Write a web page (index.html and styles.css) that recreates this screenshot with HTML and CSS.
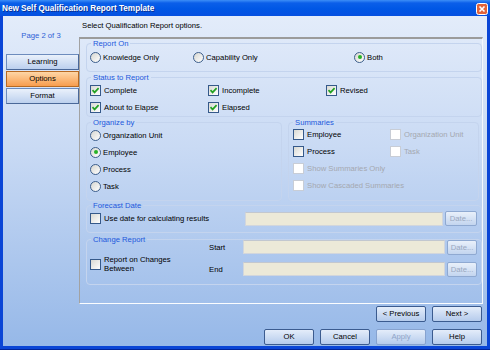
FILE: index.html
```html
<!DOCTYPE html>
<html lang="en">
<head>
    <meta charset="UTF-8">
    <title>New Self Qualification Report Template</title>
    <link rel="stylesheet" href="styles.css">
</head>
<body>
    <div class="window">
        <div class="titlebar">
            <span class="title">New Self Qualification Report Template</span>
            <span class="close">
                <svg width="12" height="12" viewBox="0 0 12 12">
                    <rect x="0.5" y="0.5" width="11" height="11" rx="2" fill="#e2633a" stroke="#fff"/>
                    <path d="M3.5 3.5 L8.5 8.5 M8.5 3.5 L3.5 8.5" stroke="#fff" stroke-width="1.6"/>
                </svg>
            </span>
        </div>
        <div class="client">
            <div class="side">
                <div class="page">Page 2 of 3</div>
                <div class="nav">
                    <div class="nav-btn">Learning</div>
                    <div class="nav-btn active">Options</div>
                    <div class="nav-btn">Format</div>
                </div>
            </div>
            <div class="main">
                <div class="intro">Select Qualification Report options.</div>
                <div class="panel">
                    <fieldset class="group report-on">
                        <legend>Report On</legend>
                        <div class="cols cols-report">
                            <label class="opt"><span class="radio"></span>Knowledge Only</label>
                            <label class="opt"><span class="radio"></span>Capability Only</label>
                            <label class="opt"><span class="radio on"></span>Both</label>
                        </div>
                    </fieldset>

                    <fieldset class="group status">
                        <legend>Status to Report</legend>
                        <div class="cols cols-status">
                            <label class="opt"><span class="box on"><svg viewBox="0 0 9 9"><path d="M1.5 4.2 L3.6 6.4 L7.6 2.2"/></svg></span>Complete</label>
                            <label class="opt"><span class="box on"><svg viewBox="0 0 9 9"><path d="M1.5 4.2 L3.6 6.4 L7.6 2.2"/></svg></span>Incomplete</label>
                            <label class="opt"><span class="box on"><svg viewBox="0 0 9 9"><path d="M1.5 4.2 L3.6 6.4 L7.6 2.2"/></svg></span>Revised</label>
                            <label class="opt"><span class="box on"><svg viewBox="0 0 9 9"><path d="M1.5 4.2 L3.6 6.4 L7.6 2.2"/></svg></span>About to Elapse</label>
                            <label class="opt"><span class="box on"><svg viewBox="0 0 9 9"><path d="M1.5 4.2 L3.6 6.4 L7.6 2.2"/></svg></span>Elapsed</label>
                        </div>
                    </fieldset>

                    <div class="split">
                        <fieldset class="group organize">
                            <legend>Organize by</legend>
                            <div class="list">
                                <label class="opt"><span class="radio"></span>Organization Unit</label>
                                <label class="opt"><span class="radio on"></span>Employee</label>
                                <label class="opt"><span class="radio"></span>Process</label>
                                <label class="opt"><span class="radio"></span>Task</label>
                            </div>
                        </fieldset>
                        <fieldset class="group summaries">
                            <legend>Summaries</legend>
                            <div class="cols cols-summ">
                                <label class="opt"><span class="box"></span>Employee</label>
                                <label class="opt off"><span class="box"></span>Organization Unit</label>
                                <label class="opt"><span class="box"></span>Process</label>
                                <label class="opt off"><span class="box"></span>Task</label>
                                <label class="opt off wide"><span class="box"></span>Show Summaries Only</label>
                                <label class="opt off wide"><span class="box"></span>Show Cascaded Summaries</label>
                            </div>
                        </fieldset>
                    </div>

                    <fieldset class="group forecast">
                        <legend>Forecast Date</legend>
                        <div class="date-row">
                            <label class="opt"><span class="box"></span>Use date for calculating results</label>
                            <span class="field"></span>
                            <span class="date-btn">Date...</span>
                        </div>
                    </fieldset>

                    <fieldset class="group change">
                        <legend>Change Report</legend>
                        <div class="change-grid">
                            <label class="opt changes"><span class="box"></span><span>Report on Changes<br>Between</span></label>
                            <span class="lbl">Start</span>
                            <span class="field"></span>
                            <span class="date-btn">Date...</span>
                            <span class="lbl">End</span>
                            <span class="field"></span>
                            <span class="date-btn">Date...</span>
                        </div>
                    </fieldset>
                </div>

                <div class="btn-row wizard">
                    <span class="btn">&lt; Previous</span>
                    <span class="btn">Next &gt;</span>
                </div>
                <div class="btn-row actions">
                    <span class="btn">OK</span>
                    <span class="btn">Cancel</span>
                    <span class="btn disabled">Apply</span>
                    <span class="btn">Help</span>
                </div>
            </div>
        </div>
    </div>
</body>
</html>
```

FILE: styles.css
```css
/* XP style dialog, small Tahoma-ish text */
body {
    margin: 0;
    background: #ffffff;
    font-family: "Liberation Sans", Arial, sans-serif;
    font-size: 7.7px;
    color: #000000;
}

.window {
    width: 490px;
    height: 350px;
    box-sizing: border-box;
    display: flex;
    flex-direction: column;
    background: #0a45d6;
    padding: 0 3px 3px 3px;
    border-bottom: 1px solid #00249a;
}

.titlebar {
    height: 16px;
    margin: 0 -3px;
    padding: 0 2px 0 2px;
    display: flex;
    align-items: center;
    justify-content: space-between;
    background: linear-gradient(#3d8ef7 0, #0b5fe9 3px, #0057e5 55%, #0650e0 100%);
}

.title {
    color: #ffffff;
    font-weight: bold;
    font-size: 8.2px;
    text-shadow: 1px 1px 0 #0a2f92;
}

.close {
    display: flex;
    margin-top: 1px;
}

.client {
    flex: 1;
    display: flex;
    background: linear-gradient(#e3ecfa 0, #c9daf4 40%, #96b8e8 100%);
}

.side {
    width: 76px;
    display: flex;
    flex-direction: column;
}

.page {
    margin-top: 15px;
    line-height: 9px;
    text-align: center;
    color: #2f62d6;
}

.nav {
    margin-top: 14px;
    margin-left: 3px;
    display: flex;
    flex-direction: column;
    gap: 1px;
}

.nav-btn {
    height: 16px;
    box-sizing: border-box;
    line-height: 14px;
    text-align: center;
    border: 1px solid #6d8cbd;
    border-right-color: #4a6899;
    border-bottom-color: #4a6899;
    background: linear-gradient(#eaf1fb, #bcd0ee);
}

.nav-btn.active {
    border-color: #b86a22;
    background: linear-gradient(#fed6a6, #f89d4e);
}

.main {
    flex: 1;
    display: flex;
    flex-direction: column;
}

.intro {
    height: 21px;
    box-sizing: border-box;
    padding: 5px 0 0 3px;
    line-height: 9px;
}

.panel {
    height: 267px;
    box-sizing: border-box;
    margin-right: 4px;
    padding: 0 0 0 6px;
    border-top: 2px solid #9b9b9b;
    border-left: 1px solid #a2a2a2;
    border-right: 1px solid #f4f8fd;
    border-bottom: 1px solid #fbfdff;
    display: flex;
    flex-direction: column;
}

.group {
    margin: 0;
    box-sizing: border-box;
    border: 1px solid #c4d4ee;
    border-radius: 4px;
    padding: 0 4px 0 3px;
    min-width: 0;
}

.group legend {
    padding: 0 2px;
    margin-left: 1px;
    line-height: 9px;
    color: #2258dc;
}

.opt {
    display: flex;
    align-items: center;
    gap: 2px;
    height: 12px;
    white-space: nowrap;
}

.opt.off {
    color: #a4a8b0;
}

.radio {
    width: 11px;
    height: 11px;
    box-sizing: border-box;
    border-radius: 50%;
    border: 1px solid #3e5f8c;
    background: linear-gradient(135deg, #d6d6d0, #ffffff);
    display: flex;
    align-items: center;
    justify-content: center;
}

.radio.on::after {
    content: "";
    width: 4px;
    height: 4px;
    border-radius: 50%;
    background: #26b226;
}

.box {
    width: 11px;
    height: 11px;
    flex: none;
    box-sizing: border-box;
    border: 1px solid #35598a;
    background: linear-gradient(135deg, #d9d9d3, #ffffff);
    display: flex;
    margin-right: 1px;
}

.box svg {
    width: 9px;
    height: 9px;
}

.box svg path {
    fill: none;
    stroke: #21a121;
    stroke-width: 1.7;
}

.opt.off .box {
    border-color: #c8cdd6;
    background: #ffffff;
}

.cols {
    display: grid;
}

.report-on {
    height: 33px;
}

.cols-report {
    grid-template-columns: 103px 161px 1fr;
    margin-top: 3px;
}

.status {
    height: 44px;
    margin-top: 1px;
}

.cols-status {
    grid-template-columns: 118px 118px 1fr;
    row-gap: 5px;
    margin-top: 2px;
}

.split {
    display: flex;
    gap: 6px;
    margin-top: 1px;
}

.organize {
    width: 196px;
    height: 83px;
}

.list {
    display: flex;
    flex-direction: column;
    gap: 5px;
    margin-top: 2px;
}

.summaries {
    width: 191px;
    height: 83px;
    padding-left: 4px;
}

.summaries legend {
    margin-left: 0;
}

.cols-summ {
    grid-template-columns: 97px 1fr;
    row-gap: 5px;
    margin-top: 1px;
}

.cols-summ .wide {
    grid-column: span 2;
}

.forecast {
    height: 32px;
}

.date-row {
    display: grid;
    grid-template-columns: 153px 1fr 32px;
    column-gap: 2px;
    align-items: center;
    margin-top: 1px;
}

.field {
    height: 14px;
    box-sizing: border-box;
    background: #ece9d8;
    border: 1px solid #d2d6dc;
    border-top-color: #c2c7cf;
}

.date-btn {
    height: 15px;
    box-sizing: border-box;
    line-height: 13px;
    text-align: center;
    color: #9aa8bf;
    border: 1px solid #8fa9d1;
    border-radius: 2px;
    background: linear-gradient(#e9f0fa, #c3d5ef);
}

.change {
    height: 50px;
    margin-top: 2px;
}

.change-grid {
    display: grid;
    grid-template-columns: 119px 34px 1fr 32px;
    grid-template-rows: 14px 14px;
    column-gap: 0;
    row-gap: 8px;
    align-items: center;
    margin-top: -4px;
}

.change-grid .date-btn {
    margin-left: 2px;
}

.changes {
    grid-row: span 2;
    height: auto;
    margin-top: 12px;
    line-height: 9px;
}

.lbl {
    line-height: 9px;
}

.btn-row {
    display: flex;
    justify-content: flex-end;
    gap: 6px;
    margin-right: 5px;
}

.wizard {
    margin-top: 2px;
}

.actions {
    margin-top: 7px;
}

.btn {
    width: 50px;
    height: 16px;
    box-sizing: border-box;
    line-height: 14px;
    text-align: center;
    border: 1px solid #3b5b8f;
    border-radius: 2px;
    background: linear-gradient(#e4edfa, #b5cbec);
}

.btn.disabled {
    color: #8ea4c8;
    border-color: #86a2cf;
}
```
